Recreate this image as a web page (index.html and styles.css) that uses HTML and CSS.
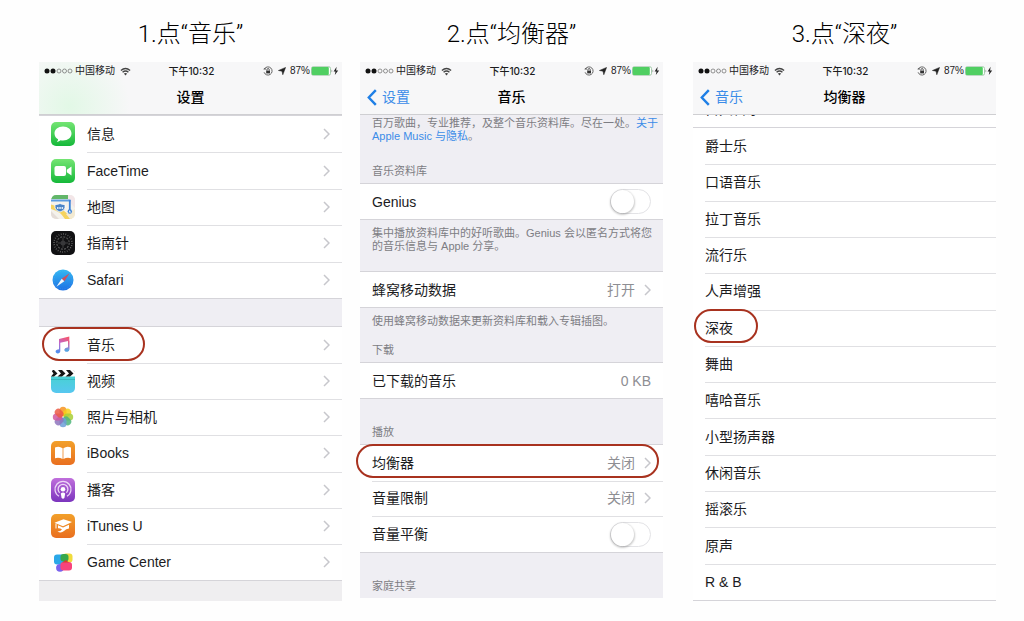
FILE: index.html
```html
<!DOCTYPE html>
<html lang="zh-CN">
<head>
    <meta charset="UTF-8">
    <meta name="viewport" content="width=device-width, initial-scale=1.0">
    <title>设置均衡器</title>
    <link rel="stylesheet" href="styles.css">
</head>
<body>
    <!-- Shared symbols -->
    <svg class="sprite" aria-hidden="true">
        <symbol id="signal" viewBox="0 0 29 6">
            <circle cx="3" cy="3" r="2.5" fill="#111"/>
            <circle cx="9" cy="3" r="2.5" fill="#111"/>
            <g fill="none" stroke="#777" stroke-width=".8">
                <circle cx="15" cy="3" r="2"/>
                <circle cx="20.500" cy="3" r="2"/>
                <circle cx="26" cy="3" r="2"/>
            </g>
        </symbol>
        <symbol id="wifi" viewBox="0 0 12 9">
            <g fill="none" stroke="#444" stroke-width="1.500">
                <path d="M1 3.300Q6-1 11 3.300"/>
                <path d="M2.800 5.400Q6 2.600 9.200 5.400"/>
            </g>
            <path d="M4.200 6.800Q6 5.400 7.800 6.800L6 8.800Z" fill="#444"/>
        </symbol>
        <symbol id="lock" viewBox="0 0 10 10">
            <path d="M1.500 2.800A4.100 4.100 0 1 1 1.100 6.300" fill="none" stroke="#555" stroke-width=".9"/>
            <path d="M.2 3.200L2.800 3.800L2.400 1.400Z" fill="#555"/>
            <rect x="3.200" y="4.600" width="3.800" height="2.800" fill="#333"/>
            <path d="M3.900 4.600V3.800a1.200 1.200 0 0 1 2.400 0V4.600" fill="none" stroke="#333" stroke-width=".8"/>
        </symbol>
        <symbol id="arrow" viewBox="0 0 8 8">
            <path d="M7.600.4L4.800 7.800L4 4.200L.4 3.500Z" fill="#222" stroke="#222" stroke-width=".5"/>
        </symbol>
        <symbol id="battery" viewBox="0 0 28 10">
            <rect x=".5" y=".8" width="19" height="8.400" rx="1.600" fill="#fff" stroke="#8fbf98" stroke-width=".8"/>
            <rect x=".8" y="1" width="17" height="8" rx="1" fill="#50cf62"/>
            <path d="M20.600 3.400q1.400 1.600 0 3.200z" fill="#666"/>
            <path d="M25.600.8L22.600 5.400H24.500L23.800 9L27.200 4.400H25.100Z" fill="#222"/>
        </symbol>
        <symbol id="chevron" viewBox="0 0 7 12">
            <path d="M1 1L6 6L1 11" fill="none" stroke="#c7c7cc" stroke-width="1.500"/>
        </symbol>
        <symbol id="back" viewBox="0 0 10 17">
            <path d="M8.800 1.200L1.800 8.500L8.800 15.800" fill="none" stroke="#1f7fe6" stroke-width="2.400"/>
        </symbol>
    </svg>

    <main class="steps">
        <!-- Step 1: settings list -->
        <section class="step">
            <h2 class="step-title">1.点“音乐”</h2>
            <div class="phone">
                <header class="topbar topbar-green">
                    <div class="status">
                        <span class="carrier"><svg class="i-signal"><use href="#signal"/></svg>中国移动<svg class="i-wifi"><use href="#wifi"/></svg></span>
                        <span class="clock">下午10:32</span>
                        <span class="power"><svg class="i-lock"><use href="#lock"/></svg><svg class="i-arrow"><use href="#arrow"/></svg>87%<svg class="i-battery"><use href="#battery"/></svg></span>
                    </div>
                    <nav class="navbar"><h3>设置</h3></nav>
                </header>

                <div class="rows rows-5 icon-rows">
                    <a class="row" href="#">
                        <svg class="app" viewBox="0 0 24 24">
                            <defs><linearGradient id="green" x2="0" y2="1"><stop stop-color="#74e573"/><stop offset="1" stop-color="#15b83a"/></linearGradient></defs>
                            <rect width="24" height="24" rx="5" fill="url(#green)"/>
                            <path d="M12 4.500c-5 0-8.500 3-8.500 7 0 2.500 1.400 4.600 3.600 5.800 0 1-.7 1.900-1.300 2.500 1.500 0 2.900-.7 3.800-1.500.8.2 1.600.2 2.400.2 5 0 8.500-3.100 8.500-7s-3.500-7-8.500-7z" fill="#fff"/>
                        </svg>
                        <span class="name">信息</span><svg class="i-chevron"><use href="#chevron"/></svg>
                    </a>
                    <a class="row" href="#">
                        <svg class="app" viewBox="0 0 24 24">
                            <rect width="24" height="24" rx="5" fill="url(#green)"/>
                            <rect x="3.500" y="7" width="11.500" height="10" rx="2" fill="#fff"/>
                            <path d="M15.800 10.800L20.500 7.500V16.500L15.800 13.200Z" fill="#fff"/>
                        </svg>
                        <span class="name">FaceTime</span><svg class="i-chevron"><use href="#chevron"/></svg>
                    </a>
                    <a class="row" href="#">
                        <svg class="app" viewBox="0 0 24 24">
                            <defs><clipPath id="tile"><rect width="24" height="24" rx="5"/></clipPath></defs>
                            <g clip-path="url(#tile)">
                                <rect width="24" height="24" fill="#f4f2ec"/>
                                <path d="M2 0H17V4H0Z" fill="#62b66a"/>
                                <path d="M17 0H24V13L17 5Z" fill="#f3e6e8"/>
                                <path d="M0 4.500H19.500V6.500H0Z" fill="#5b9be0"/>
                                <path d="M0 16L8 24H0Z" fill="#e4ddd8"/>
                                <path d="M0 9.500Q12 12 21 24H14Q9 16 0 14Z" fill="#f5d35f"/>
                                <path d="M15 19L24 14V24H19Z" fill="#f3ead2"/>
                                <path d="M18.800 5V15" stroke="#3d83d8" stroke-width="1.800"/>
                                <circle cx="18.800" cy="16.500" r="2.200" fill="#3d83d8"/>
                                <path d="M18.800 15.100l1.200 2.700-1.200-.6-1.200.6z" fill="#fff"/>
                                <path d="M4 9.500Q6.500 9.800 9 8.500Q11.500 9.800 14 9.500V13Q13 16 9 17Q5 16 4 13Z" fill="#4b84c6" stroke="#fff" stroke-width=".8"/>
                                <path d="M6 12h1.500v2H6zM8.300 12h1.500v2H8.300zM10.600 12h1.500v2h-1.500z" fill="#dbe8f6"/>
                            </g>
                        </svg>
                        <span class="name">地图</span><svg class="i-chevron"><use href="#chevron"/></svg>
                    </a>
                    <a class="row" href="#">
                        <svg class="app" viewBox="0 0 24 24">
                            <rect width="24" height="24" rx="5" fill="#111113"/>
                            <circle cx="12" cy="12" r="9" fill="none" stroke="#777" stroke-width="1.500" stroke-dasharray=".7 1.650"/>
                            <circle cx="12" cy="12" r="6.200" fill="none" stroke="#555" stroke-width="1.200" stroke-dasharray="2 1.200"/>
                            <path d="M12 7V17M7 12H17" stroke="#555" stroke-width=".7"/>
                            <circle cx="12" cy="12" r="2.500" fill="#38383a"/>
                        </svg>
                        <span class="name">指南针</span><svg class="i-chevron"><use href="#chevron"/></svg>
                    </a>
                    <a class="row" href="#">
                        <svg class="app" viewBox="0 0 24 24">
                            <defs><linearGradient id="blue" x2="0" y2="1"><stop stop-color="#35b8f2"/><stop offset="1" stop-color="#1c70e4"/></linearGradient></defs>
                            <circle cx="12" cy="12" r="10.500" fill="url(#blue)"/>
                            <circle cx="12" cy="12" r="9" fill="none" stroke="#8fd0fa" stroke-width=".8" stroke-dasharray=".5 1.300" opacity=".4"/>
                            <path d="M18.600 5.200L10.700 10.700L13.300 13.300Z" fill="#d0505c"/>
                            <path d="M5.400 18.800L10.700 10.700L13.300 13.300Z" fill="#f3f7fb"/>
                        </svg>
                        <span class="name">Safari</span><svg class="i-chevron"><use href="#chevron"/></svg>
                    </a>
                </div>

                <div class="divider"></div>

                <div class="rows rows-7 icon-rows">
                    <a class="row marked" href="#">
                        <svg class="app" viewBox="0 0 24 24">
                            <defs><linearGradient id="note" x1=".7" x2=".4" y2="1"><stop stop-color="#f5566f"/><stop offset=".45" stop-color="#c065c9"/><stop offset="1" stop-color="#4f8fee"/></linearGradient>
                            <linearGradient id="stem" x2="0" y2="1"><stop stop-color="#f4596f"/><stop offset=".5" stop-color="#a47ac8"/><stop offset="1" stop-color="#43b3e8"/></linearGradient></defs>
                            <path d="M8 6L18.300 3.600V16.300c0 1.400-1.100 2.300-2.500 2.300-1.300 0-2.200-.7-2.200-1.700 0-1.200 1-1.900 2.300-2.100.8-.1 1.200-.3 1.200-1.100V8L9.300 9.700V18c0 1.500-1.100 2.400-2.500 2.400-1.300 0-2.200-.7-2.200-1.800 0-1.200 1-1.800 2.300-2 .8-.1 1.100-.4 1.100-1.100Z" fill="url(#note)"/>
                            <path d="M17.100 8L18.300 7.700V16.300c0 1.400-1.100 2.300-2.500 2.300-1.300 0-2.200-.7-2.200-1.700 0-1.200 1-1.900 2.300-2.100.8-.1 1.200-.3 1.200-1.100Z" fill="url(#stem)"/>
                        </svg>
                        <span class="name">音乐</span><svg class="i-chevron"><use href="#chevron"/></svg>
                    </a>
                    <a class="row" href="#">
                        <svg class="app" viewBox="0 0 24 24">
                            <defs><linearGradient id="aqua" x2="0" y2="1"><stop stop-color="#48d1d4"/><stop offset="1" stop-color="#57c7f0"/></linearGradient></defs>
                            <g clip-path="url(#tile)">
                                <rect width="24" height="24" fill="#fff"/>
                                <rect y="7.500" width="24" height="16.500" fill="url(#aqua)"/>
                                <path d="M0 1H3L6.500 4.500L3 7.500H0L2.500 4.500ZM7 1H11L14.500 4.500L11 7.500H6.500L10 4.500ZM15 1H19L22.500 4.500L19 7.500H14.500L18 4.500ZM22.500 1H24V3Z" fill="#151515"/>
                                <path d="M0 10.500H24" stroke="#36aeb8" stroke-width=".8"/>
                            </g>
                        </svg>
                        <span class="name">视频</span><svg class="i-chevron"><use href="#chevron"/></svg>
                    </a>
                    <a class="row" href="#">
                        <svg class="app" viewBox="0 0 24 24">
                            <g class="petals">
                                <rect x="8.500" y="1.800" width="7" height="9.500" rx="3.500" fill="#f7941e"/>
                                <rect x="8.500" y="1.800" width="7" height="9.500" rx="3.500" fill="#f5d019" transform="rotate(45 12 12)"/>
                                <rect x="8.500" y="1.800" width="7" height="9.500" rx="3.500" fill="#a8cf38" transform="rotate(90 12 12)"/>
                                <rect x="8.500" y="1.800" width="7" height="9.500" rx="3.500" fill="#4fb57c" transform="rotate(135 12 12)"/>
                                <rect x="8.500" y="1.800" width="7" height="9.500" rx="3.500" fill="#6c9fd8" transform="rotate(180 12 12)"/>
                                <rect x="8.500" y="1.800" width="7" height="9.500" rx="3.500" fill="#8e74bd" transform="rotate(225 12 12)"/>
                                <rect x="8.500" y="1.800" width="7" height="9.500" rx="3.500" fill="#d0589f" transform="rotate(270 12 12)"/>
                                <rect x="8.500" y="1.800" width="7" height="9.500" rx="3.500" fill="#ec5a45" transform="rotate(315 12 12)"/>
                            </g>
                        </svg>
                        <span class="name">照片与相机</span><svg class="i-chevron"><use href="#chevron"/></svg>
                    </a>
                    <a class="row" href="#">
                        <svg class="app" viewBox="0 0 24 24">
                            <defs><linearGradient id="orange" x2="0" y2="1"><stop stop-color="#f2a02a"/><stop offset="1" stop-color="#e96f20"/></linearGradient></defs>
                            <rect width="24" height="24" rx="5" fill="url(#orange)"/>
                            <path d="M11.600 7.300Q8 4.700 4 6.600V17.200Q8 16 11.600 18ZM12.400 7.300Q16 4.700 20 6.600V17.200Q16 16 12.400 18Z" fill="#fff"/>
                        </svg>
                        <span class="name">iBooks</span><svg class="i-chevron"><use href="#chevron"/></svg>
                    </a>
                    <a class="row" href="#">
                        <svg class="app" viewBox="0 0 24 24">
                            <defs><linearGradient id="purple" x2="0" y2="1"><stop stop-color="#c06fdc"/><stop offset="1" stop-color="#7b35bd"/></linearGradient></defs>
                            <rect width="24" height="24" rx="5" fill="url(#purple)"/>
                            <g fill="none" stroke="#ecd6f6" stroke-width="1.300">
                                <path d="M8 18.300A8 8 0 1 1 16 18.300"/>
                                <path d="M8.600 14.800A4.900 4.900 0 1 1 15.400 14.800"/>
                            </g>
                            <circle cx="12" cy="11.200" r="2.300" fill="#fff"/>
                            <path d="M9.800 15.500Q12 13.400 14.200 15.500L13.400 20Q12 21.400 10.600 20Z" fill="#fff"/>
                        </svg>
                        <span class="name">播客</span><svg class="i-chevron"><use href="#chevron"/></svg>
                    </a>
                    <a class="row" href="#">
                        <svg class="app" viewBox="0 0 24 24">
                            <rect width="24" height="24" rx="5" fill="url(#orange)"/>
                            <path d="M3.500 8.800L12.500 5.300L21 8L12 12.200Z" fill="#fff"/>
                            <path d="M7 11.300L12 13.500L18 10.800V14.500Q15 14.500 13 17Q10 19.500 6.500 17.500Q9.500 17.500 11 15.400Q9 14 7 14.300Z" fill="#fff"/>
                            <path d="M5 9.500V14.500" stroke="#fff" stroke-width="1"/>
                        </svg>
                        <span class="name">iTunes U</span><svg class="i-chevron"><use href="#chevron"/></svg>
                    </a>
                    <a class="row" href="#">
                        <svg class="app" viewBox="0 0 24 24">
                            <rect x="12" y="3.500" width="9.500" height="9" rx="3" fill="#f0dc3c"/>
                            <rect x="3" y="4.500" width="11" height="10" rx="3" fill="#2ba8e8"/>
                            <rect x="9.500" y="4" width="8" height="7.500" rx="3" fill="#37a84c"/>
                            <circle cx="9" cy="17.800" r="3.900" fill="#7a63ee"/>
                            <rect x="9.500" y="12" width="11.500" height="8.500" rx="3" fill="#f8447c"/>
                            <path d="M11 12.500L18 12.500L15 10Z" fill="#d7412b"/>
                        </svg>
                        <span class="name">Game Center</span><svg class="i-chevron"><use href="#chevron"/></svg>
                    </a>
                </div>

                <div class="list-end"></div>
            </div>
        </section>

        <!-- Step 2: music settings -->
        <section class="step">
            <h2 class="step-title">2.点“均衡器”</h2>
            <div class="phone grouped">
                <header class="topbar">
                    <div class="status">
                        <span class="carrier"><svg class="i-signal"><use href="#signal"/></svg>中国移动<svg class="i-wifi"><use href="#wifi"/></svg></span>
                        <span class="clock">下午10:32</span>
                        <span class="power"><svg class="i-lock"><use href="#lock"/></svg><svg class="i-arrow"><use href="#arrow"/></svg>87%<svg class="i-battery"><use href="#battery"/></svg></span>
                    </div>
                    <nav class="navbar">
                        <a class="back" href="#"><svg class="i-back"><use href="#back"/></svg>设置</a>
                        <h3>音乐</h3>
                    </nav>
                </header>

                <p class="note note-top">百万歌曲，专业推荐，及整个音乐资料库。尽在一处。<a href="#">关于 Apple Music 与隐私</a>。</p>

                <h4 class="group-title">音乐资料库</h4>
                <div class="rows rows-1">
                    <label class="row"><span class="name">Genius</span><input class="switch" type="checkbox"></label>
                </div>
                <p class="note note-gap">集中播放资料库中的好听歌曲。Genius 会以匿名方式将您的音乐信息与 Apple 分享。</p>

                <div class="rows rows-1">
                    <a class="row" href="#"><span class="name">蜂窝移动数据</span><span class="value">打开</span><svg class="i-chevron"><use href="#chevron"/></svg></a>
                </div>
                <p class="note">使用蜂窝移动数据来更新资料库和载入专辑插图。</p>

                <h4 class="group-title tight">下载</h4>
                <div class="rows rows-1">
                    <div class="row"><span class="name">已下载的音乐</span><span class="value">0 KB</span></div>
                </div>

                <h4 class="group-title wide">播放</h4>
                <div class="rows rows-3">
                    <a class="row marked mark-eq" href="#"><span class="name">均衡器</span><span class="value">关闭</span><svg class="i-chevron"><use href="#chevron"/></svg></a>
                    <a class="row" href="#"><span class="name">音量限制</span><span class="value">关闭</span><svg class="i-chevron"><use href="#chevron"/></svg></a>
                    <label class="row"><span class="name">音量平衡</span><input class="switch" type="checkbox"></label>
                </div>

                <h4 class="group-title wide">家庭共享</h4>
            </div>
        </section>

        <!-- Step 3: equalizer presets -->
        <section class="step step-last">
            <h2 class="step-title">3.点“深夜”</h2>
            <div class="phone">
                <header class="topbar">
                    <div class="status">
                        <span class="carrier"><svg class="i-signal"><use href="#signal"/></svg>中国移动<svg class="i-wifi"><use href="#wifi"/></svg></span>
                        <span class="clock">下午10:32</span>
                        <span class="power"><svg class="i-lock"><use href="#lock"/></svg><svg class="i-arrow"><use href="#arrow"/></svg>87%<svg class="i-battery"><use href="#battery"/></svg></span>
                    </div>
                    <nav class="navbar">
                        <a class="back" href="#"><svg class="i-back"><use href="#back"/></svg>音乐</a>
                        <h3>均衡器</h3>
                    </nav>
                </header>

                <div class="scrolled"><a class="row" href="#"><span class="name">古典音乐</span></a></div>
                <div class="rows rows-13">
                    <a class="row" href="#"><span class="name">爵士乐</span></a>
                    <a class="row" href="#"><span class="name">口语音乐</span></a>
                    <a class="row" href="#"><span class="name">拉丁音乐</span></a>
                    <a class="row" href="#"><span class="name">流行乐</span></a>
                    <a class="row" href="#"><span class="name">人声增强</span></a>
                    <a class="row marked mark-night" href="#"><span class="name">深夜</span></a>
                    <a class="row" href="#"><span class="name">舞曲</span></a>
                    <a class="row" href="#"><span class="name">嘻哈音乐</span></a>
                    <a class="row" href="#"><span class="name">小型扬声器</span></a>
                    <a class="row" href="#"><span class="name">休闲音乐</span></a>
                    <a class="row" href="#"><span class="name">摇滚乐</span></a>
                    <a class="row" href="#"><span class="name">原声</span></a>
                    <a class="row" href="#"><span class="name">R &amp; B</span></a>
                </div>
            </div>
        </section>
    </main>
</body>
</html>
```
FILE: styles.css
```css
*, *::before, *::after {
    box-sizing: border-box;
}

body {
    margin: 0;
    background: #fefefe;
    color: #1c1c1e;
    font-family: "Liberation Sans", "Noto Sans CJK SC", sans-serif;
    font-size: 14px;
    line-height: 20px;
}

a {
    color: inherit;
    text-decoration: none;
}

h2, h3, h4, p {
    margin: 0;
    font-weight: normal;
}

svg {
    display: block;
    flex: none;
}

.sprite {
    display: none;
}

.steps {
    display: flex;
    gap: 18px;
    padding: 14px 28px 20px 39px;
}

.step {
    flex: 1;
    min-width: 0;
}

.step-last {
    margin-left: 12px;
}

.step-title {
    height: 48px;
    line-height: 40px;
    text-align: center;
    font-family: Roboto, "Noto Sans CJK SC", sans-serif;
    font-size: 24px;
    font-weight: 300;
    color: #000;
}

.phone {
    background: #fff;
}

.grouped {
    background: #efeef3;
}

/* Status bar and navigation bar */
.topbar {
    background: #f7f7f8;
    border-bottom: 1px solid #cfcfd2;
}

.topbar-green {
    background: radial-gradient(circle at 10% 85%, #e2f8e6, #f7f7f8 22%);
}

.status {
    display: grid;
    grid-template-columns: 1fr auto 1fr;
    align-items: center;
    height: 18px;
    padding: 0 3px 0 5px;
    font-size: 10px;
    line-height: 18px;
}

.carrier, .power {
    display: flex;
    align-items: center;
}

.power {
    justify-content: flex-end;
}

.clock {
    font-family: Inter, "Noto Sans CJK SC", sans-serif;
    font-weight: 500;
}

.i-signal { width: 29px; height: 6px; margin-right: 2px; }
.i-wifi { width: 11px; height: 9px; margin-left: 5px; }
.i-lock { width: 10px; height: 10px; margin-right: 5px; }
.i-arrow { width: 8px; height: 8px; margin-right: 4px; }
.i-battery { width: 28px; height: 10px; margin-left: 1px; }
.i-chevron { width: 7px; height: 12px; }
.i-back { width: 10px; height: 17px; }

.navbar {
    display: grid;
    grid-template-columns: 1fr auto 1fr;
    align-items: center;
    height: 34px;
    padding: 0 7px;
}

.navbar h3 {
    grid-column: 2;
    font-size: 14px;
    font-weight: 500;
    color: #000;
}

.back {
    display: flex;
    align-items: center;
    gap: 5px;
    color: #3b8ce8;
}

/* List rows share the height of their group evenly */
.rows {
    display: grid;
    grid-auto-rows: 1fr;
    background: #fff;
    border: solid #d5d4d9;
    border-width: 1px 0;
}

.rows-1 { min-height: 37px; }
.rows-3 { min-height: 109px; }
.rows-5 { min-height: 184px; }
.rows-7 { min-height: 255px; }
.rows-13 { min-height: 474px; }

.row {
    position: relative;
    display: flex;
    align-items: center;
    padding-right: 12px;
    padding-left: 12px;
}

.name {
    flex: 1;
}

.row + .row::before {
    content: "";
    position: absolute;
    top: 0;
    right: 0;
    left: 12px;
    border-top: 1px solid #e0e0e3;
}

.icon-rows .row + .row::before {
    left: 48px;
}

.app {
    width: 24px;
    height: 24px;
    margin-right: 12px;
}

.petals rect {
    opacity: 0.85;
}

.value {
    color: #8e8e93;
}

.value + .i-chevron {
    margin-left: 9px;
}

.divider {
    height: 27px;
    background: #efeef3;
}

.list-end {
    height: 20px;
    background: #efeef0;
}

/* Grouped text */
.note, .group-title {
    font-size: 11px;
    line-height: 13px;
    color: #7d7d83;
}

.note {
    padding: 7px 4px 0 12px;
}

.note-top {
    padding-top: 2px;
}

.note-top a {
    color: #3b8ce8;
}

.note-gap {
    padding-bottom: 18px;
}

.group-title {
    padding: 22px 12px 5px;
}

.tight {
    padding-top: 16px;
}

.wide {
    padding-top: 27px;
}

/* Toggle */
.switch {
    appearance: none;
    display: flex;
    width: 41px;
    height: 25px;
    margin: 0;
    background: #fff;
    border: 1px solid #e3e3e6;
    border-radius: 13px;
}

.switch::before {
    content: "";
    width: 23px;
    height: 23px;
    background: #fff;
    border-radius: 50%;
    box-shadow: 0 1px 2px 1px rgba(0, 0, 0, 0.2);
}

.switch:checked {
    justify-content: flex-end;
    background: #4cd964;
}

/* Row cut off by the navigation bar */
.scrolled {
    display: flex;
    align-items: flex-end;
    height: 12px;
    overflow: hidden;
}

.scrolled .row {
    height: 36px;
}

/* Red outline round the row to tap */
.marked::after {
    content: "";
    position: absolute;
    z-index: 1;
    top: 0;
    left: 3px;
    width: 103px;
    height: 34px;
    border: 2px solid #a8321f;
    border-radius: 17px;
}

.mark-eq::after {
    top: -1px;
    left: -4px;
    width: 100%;
}

.mark-night::after {
    top: -1px;
    left: 1px;
    width: 64px;
}
```
